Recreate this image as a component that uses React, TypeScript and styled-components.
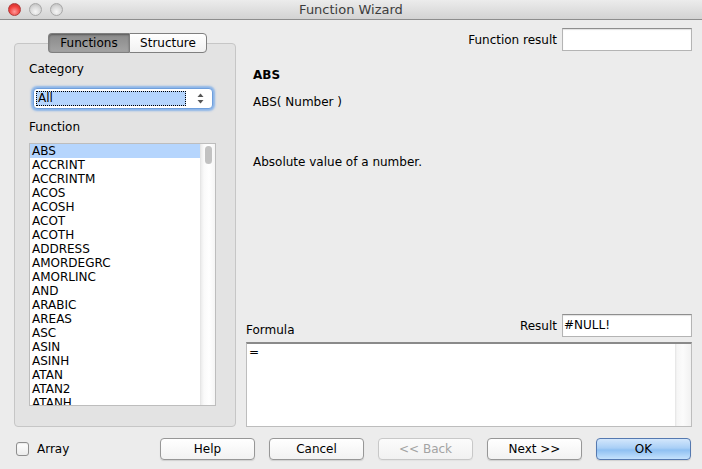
import React from 'react';
import styled, { createGlobalStyle } from 'styled-components';

const Global = createGlobalStyle`
  html, body { margin: 0; padding: 0; background: #ececec; }
  body { font-family: "DejaVu Sans", "Noto Sans", sans-serif; font-size: 12px; color: #000; }
  * { box-sizing: border-box; }
`;

const Window = styled.div`
  width: 702px;
  height: 469px;
  display: flex;
  flex-direction: column;
  background: #ececec;
  overflow: hidden;
`;

const TitleBar = styled.div`
  height: 20px;
  flex: none;
  border-bottom: 1px solid #8d8d8d;
  background: linear-gradient(#ececec, #d3d3d3);
  display: grid;
  grid-template-columns: 1fr auto 1fr;
  align-items: center;
`;

const Lights = styled.div`
  display: flex;
  gap: 8px;
  padding-left: 8px;
`;

const Light = styled.span<{ $red?: boolean }>`
  width: 13px;
  height: 13px;
  border-radius: 50%;
  border: 1px solid ${p => (p.$red ? '#b03a3a' : '#a8a8a8')};
  background: ${p =>
    p.$red
      ? 'radial-gradient(circle at 50% 70%, #ff9a9a 0%, #f0403c 55%, #c52a26 100%)'
      : 'radial-gradient(circle at 50% 70%, #f6f6f6 0%, #d8d8d8 55%, #b5b5b5 100%)'};
`;

const Title = styled.div`
  font-size: 13px;
  color: #3d3d3d;
  line-height: 19px;
`;

const Body = styled.div`
  flex: 1;
  min-height: 0;
  display: flex;
  flex-direction: column;
  padding: 8px 10px 9px 14px;
`;

const Main = styled.div`
  flex: 1;
  display: flex;
  gap: 10px;
  min-height: 0;
`;

const LeftColumn = styled.div`
  width: 222px;
  min-height: 0;
  display: flex;
  flex-direction: column;
  padding-top: 5px;
`;

const Tabs = styled.div`
  display: flex;
  justify-content: center;
  margin: 0 0 -10px 5px;
  position: relative;
  z-index: 1;
`;

const Tab = styled.div<{ $active?: boolean; $first?: boolean }>`
  height: 20px;
  width: ${p => (p.$first ? '81px' : '78px')};
  display: flex;
  align-items: center;
  justify-content: center;
  font-size: 12px;
  border: 1px solid #7f7f7f;
  ${p => (p.$first ? 'border-right: none;' : '')}
  border-radius: ${p => (p.$first ? '4px 0 0 4px' : '0 4px 4px 0')};
  background: ${p =>
    p.$active
      ? 'linear-gradient(#8a8a8a, #a3a3a3)'
      : 'linear-gradient(#ffffff, #f1f1f1)'};
  box-shadow: ${p => (p.$active ? 'inset 0 1px 2px rgba(0,0,0,0.35)' : 'none')};
`;

const GroupBox = styled.div`
  flex: 1;
  min-height: 0;
  background: #e3e3e3;
  border: 1px solid #c6c6c6;
  border-radius: 4px;
  padding: 18px 19px 20px 14px;
  display: flex;
  flex-direction: column;
`;

const Label = styled.div`
  line-height: 14px;
  font-size: 12px;
  white-space: nowrap;
`;

const SelectBox = styled.div`
  margin: 12px 0 11px 4px;
  width: 180px;
  height: 21px;
  flex: none;
  border: 1px solid #6f9fdc;
  border-radius: 4px;
  box-shadow: 0 0 2px 2px rgba(110, 165, 235, 0.75);
  background: #fff;
  display: flex;
  align-items: stretch;
  padding: 2px 0 2px 2px;
`;

const SelectValue = styled.div`
  flex: 1;
  background: #b5d5fd;
  border: 1px dotted #000;
  line-height: 13px;
  padding-left: 1px;
  font-size: 12px;
`;

const SelectArrows = styled.div`
  width: 26px;
  display: flex;
  align-items: center;
  justify-content: center;
  padding-left: 2px;
`;

const ListBox = styled.div`
  margin-top: 9px;
  flex: 1;
  min-height: 0;
  border: 1px solid #bdbdbd;
  background: #fff;
  display: flex;
  overflow: hidden;
`;

const ListItems = styled.div`
  flex: 1;
  overflow: hidden;
`;

const ListItem = styled.div<{ $selected?: boolean }>`
  height: 14px;
  line-height: 14px;
  padding-left: 2px;
  font-size: 12px;
  background: ${p => (p.$selected ? '#b5d5fd' : 'transparent')};
  white-space: nowrap;
`;

const ScrollTrack = styled.div`
  width: 15px;
  flex: none;
  background: linear-gradient(90deg, #ececec 0px, #fafafa 3px, #ffffff 8px, #f3f3f3 15px);
  border-left: 1px solid #e6e6e6;
  display: flex;
  justify-content: center;
  padding-top: 2px;
`;

const ScrollThumb = styled.div`
  width: 7px;
  height: 18px;
  border-radius: 4px;
  background: #c2c2c2;
`;

const RightColumn = styled.div`
  flex: 1;
  display: flex;
  flex-direction: column;
  min-width: 0;
  min-height: 0;
`;

const FieldRow = styled.div`
  display: flex;
  justify-content: flex-end;
  align-items: center;
  gap: 5px;
`;

const TextField = styled.div<{ $h: number }>`
  width: 130px;
  height: ${p => p.$h}px;
  background: #fff;
  border: 1px solid #b4b4b4;
  border-top-color: #8e8e8e;
  box-shadow: inset 0 1px 1px rgba(0, 0, 0, 0.12);
  line-height: ${p => p.$h - 2}px;
  padding-left: 1px;
  font-size: 12px;
`;

const Info = styled.div`
  padding-left: 7px;
  display: flex;
  flex-direction: column;
`;

const FuncName = styled.div`
  margin-top: 17px;
  font-weight: bold;
  line-height: 14px;
  font-size: 12px;
`;

const Syntax = styled.div`
  margin-top: 13px;
  line-height: 14px;
`;

const Description = styled.div`
  margin-top: 46px;
  line-height: 14px;
`;

const Spacer = styled.div`
  flex: 1;
`;

const FormulaHeader = styled.div`
  display: flex;
  align-items: flex-end;
  justify-content: space-between;
`;

const FormulaBox = styled.div`
  margin-top: 5px;
  height: 85px;
  flex: none;
  background: #fff;
  border: 1px solid #bdbdbd;
  border-top: 2px solid #8a8a8a;
  display: flex;
`;

const FormulaText = styled.div`
  flex: 1;
  padding: 1px 2px;
  line-height: 14px;
`;

const FormulaScroll = styled.div`
  width: 16px;
  background: linear-gradient(90deg, #e3e3e3 0px, #f6f6f6 2px, #fbfbfb 8px, #f1f1f1 16px);
`;

const Footer = styled.div`
  margin-top: 11px;
  height: 22px;
  flex: none;
  display: flex;
  align-items: center;
`;

const CheckWrap = styled.label`
  display: flex;
  align-items: center;
  gap: 8px;
  margin-left: 2px;
  width: 144px;
`;

const CheckBox = styled.span`
  width: 13px;
  height: 14px;
  border: 1px solid #8e8e8e;
  border-radius: 3px;
  background: linear-gradient(#ffffff, #ececec);
  box-shadow: inset 0 1px 1px rgba(0,0,0,0.08);
`;

const Buttons = styled.div`
  display: flex;
  gap: 14px;
`;

const Button = styled.div<{ $variant?: 'default' | 'disabled' | 'primary' }>`
  width: 95px;
  height: 22px;
  border-radius: 4px;
  display: flex;
  align-items: center;
  justify-content: center;
  font-size: 12px;
  border: 1px solid
    ${p =>
      p.$variant === 'disabled' ? '#c8c8c8' : p.$variant === 'primary' ? '#5579b0' : '#979797'};
  color: ${p => (p.$variant === 'disabled' ? '#a3a3a3' : '#000')};
  background: ${p =>
    p.$variant === 'primary'
      ? 'linear-gradient(#d3e7fc 0%, #a9cff6 45%, #8fc0f2 55%, #c5e2fd 100%)'
      : p.$variant === 'disabled'
      ? 'linear-gradient(#fbfbfb, #f1f1f1)'
      : 'linear-gradient(#ffffff, #f2f2f2)'};
  box-shadow: 0 1px 1px rgba(0, 0, 0, ${p => (p.$variant === 'disabled' ? 0.04 : 0.12)});
`;

const functions = [
  'ABS', 'ACCRINT', 'ACCRINTM', 'ACOS', 'ACOSH', 'ACOT', 'ACOTH', 'ADDRESS',
  'AMORDEGRC', 'AMORLINC', 'AND', 'ARABIC', 'AREAS', 'ASC', 'ASIN', 'ASINH',
  'ATAN', 'ATAN2', 'ATANH', 'AVEDEV',
];

export default function App() {
  return (
    <>
      <Global />
      <Window>
        <TitleBar>
          <Lights>
            <Light $red />
            <Light />
            <Light />
          </Lights>
          <Title>Function Wizard</Title>
          <div />
        </TitleBar>
        <Body>
          <Main>
            <LeftColumn>
              <Tabs>
                <Tab $active $first>Functions</Tab>
                <Tab>Structure</Tab>
              </Tabs>
              <GroupBox>
                <Label>Category</Label>
                <SelectBox>
                  <SelectValue>All</SelectValue>
                  <SelectArrows>
                    <svg width="7" height="11" viewBox="0 0 7 11">
                      <path d="M3.5 0.5 L6.5 4 L0.5 4 Z" fill="#555" />
                      <path d="M3.5 10.5 L6.5 7 L0.5 7 Z" fill="#555" />
                    </svg>
                  </SelectArrows>
                </SelectBox>
                <Label>Function</Label>
                <ListBox>
                  <ListItems>
                    {functions.map((f, i) => (
                      <ListItem key={f} $selected={i === 0}>{f}</ListItem>
                    ))}
                  </ListItems>
                  <ScrollTrack>
                    <ScrollThumb />
                  </ScrollTrack>
                </ListBox>
              </GroupBox>
            </LeftColumn>
            <RightColumn>
              <FieldRow>
                <Label>Function result</Label>
                <TextField $h={23} />
              </FieldRow>
              <Info>
                <FuncName>ABS</FuncName>
                <Syntax>ABS( Number )</Syntax>
                <Description>Absolute value of a number.</Description>
              </Info>
              <Spacer />
              <FormulaHeader>
                <Label>Formula</Label>
                <FieldRow>
                  <Label>Result</Label>
                  <TextField $h={23}>#NULL!</TextField>
                </FieldRow>
              </FormulaHeader>
              <FormulaBox>
                <FormulaText>=</FormulaText>
                <FormulaScroll />
              </FormulaBox>
            </RightColumn>
          </Main>
          <Footer>
            <CheckWrap>
              <CheckBox />
              <span>Array</span>
            </CheckWrap>
            <Buttons>
              <Button>Help</Button>
              <Button>Cancel</Button>
              <Button $variant="disabled">&lt;&lt; Back</Button>
              <Button>Next &gt;&gt;</Button>
              <Button $variant="primary">OK</Button>
            </Buttons>
          </Footer>
        </Body>
      </Window>
    </>
  );
}
